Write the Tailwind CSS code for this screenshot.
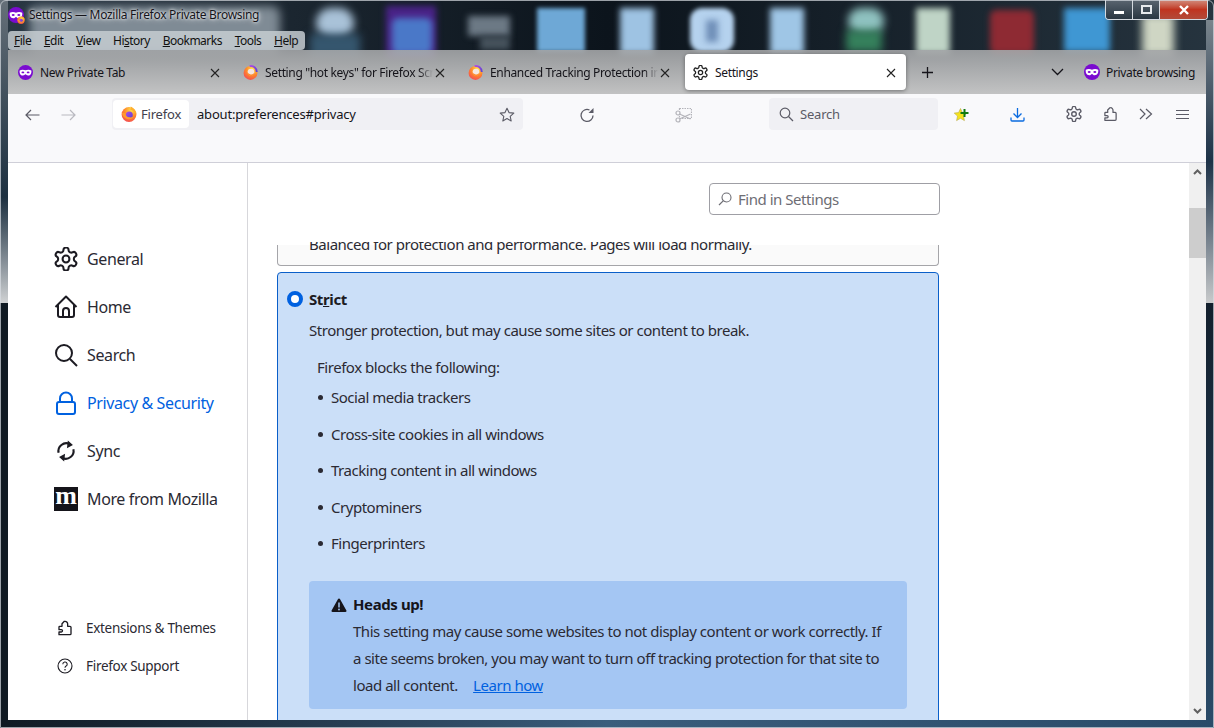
<!DOCTYPE html>
<html lang="en">
<head>
  <meta charset="UTF-8">
  <title>Settings</title>
  <script src="https://cdn.jsdelivr.net/npm/@tailwindcss/browser@4"></script>
</head>
<body class="bg-[#0d1620]">
  <svg class="absolute w-0 h-0">
    <defs>
      <radialGradient id="fx" cx="0.65" cy="0.2" r="1">
        <stop offset="0" stop-color="#ffe14a"/><stop offset="0.45" stop-color="#ff8a2b"/><stop offset="1" stop-color="#f0355f"/>
      </radialGradient>
      <linearGradient id="fxp" x1="0" y1="0" x2="1" y2="1">
        <stop offset="0" stop-color="#b14ee0"/><stop offset="1" stop-color="#5a3fd6"/>
      </linearGradient>
    </defs>
    <symbol id="gear" viewBox="1.5 1.5 21 21"><path fill="none" stroke="currentColor" stroke-width="1.800" stroke-linejoin="round" d="M12.220 2h-.44a2 2 0 0 0-2 2v.18a2 2 0 0 1-1 1.730l-.43.25a2 2 0 0 1-2 0l-.15-.08a2 2 0 0 0-2.730.73l-.22.38a2 2 0 0 0 .73 2.730l.15.1a2 2 0 0 1 1 1.720v.51a2 2 0 0 1-1 1.740l-.15.09a2 2 0 0 0-.73 2.730l.22.38a2 2 0 0 0 2.730.73l.15-.08a2 2 0 0 1 2 0l.43.25a2 2 0 0 1 1 1.730V20a2 2 0 0 0 2 2h.44a2 2 0 0 0 2-2v-.18a2 2 0 0 1 1-1.730l.43-.25a2 2 0 0 1 2 0l.15.08a2 2 0 0 0 2.730-.73l.22-.39a2 2 0 0 0-.73-2.730l-.15-.08a2 2 0 0 1-1-1.740v-.5a2 2 0 0 1 1-1.740l.15-.09a2 2 0 0 0 .73-2.730l-.22-.38a2 2 0 0 0-2.730-.73l-.15.08a2 2 0 0 1-2 0l-.43-.25a2 2 0 0 1-1-1.730V4a2 2 0 0 0-2-2z"/><circle cx="12" cy="12" r="3" fill="none" stroke="currentColor" stroke-width="1.800"/></symbol>
    <symbol id="puzzle" viewBox="0 0 24 24"><path fill="none" stroke="currentColor" stroke-width="2" stroke-linejoin="round" d="M3 22h16.500a1.500 1.500 0 0 0 1.500-1.500V11a1.500 1.500 0 0 0-1.500-1.500H16V6.500a4 4 0 0 0-4-4.500h-1L7.500 5.500V9.500H4a1 1 0 0 0-1 1v4h3.500a1.700 1.700 0 0 1 0 3.500H3z"/></symbol>
    <symbol id="mask" viewBox="0 0 16 16"><circle cx="8" cy="8" r="8" fill="#7a0bd0"/><path fill="#fff" d="M1.800 5.800C3.500 4.700 6.500 4.900 8 5.700c1.500-.8 4.500-1 6.200.1.500 2.700-.7 5.500-3.400 5.500-1.500 0-2-1.400-2.800-1.400s-1.300 1.400-2.800 1.400C2.500 11.300 1.300 8.500 1.800 5.800z"/><ellipse cx="5.200" cy="7.900" rx="1.500" ry="1" fill="#7a0bd0"/><ellipse cx="10.800" cy="7.900" rx="1.500" ry="1" fill="#7a0bd0"/></symbol>
    <symbol id="firefox" viewBox="0 0 16 16"><circle cx="8" cy="8.500" r="7.400" fill="url(#fx)"/><path fill="#ffb02e" d="M9.500.5c3 1.200 5.800 4 5.900 8-1.500-3-3.700-4.500-6.400-4.500 1.200-1 1.200-2.300.5-3.500z"/><circle cx="8.300" cy="8.900" r="3.500" fill="url(#fxp)"/><path fill="#ff9a2e" d="M.8 6.500c.7 4.500 4 6.800 7.200 6.800 2.700 0 4.500-1.700 5-3.500-1 1.200-2.800 1.800-4.500 1.500C6 11.400 4.300 9.300 4.500 6.800 3 7.200 1.800 7.200.8 6.500z"/></symbol>
    <symbol id="favicon" viewBox="0 0 16 16"><circle cx="8" cy="8.500" r="7.400" fill="url(#fx)"/><path d="M7 1.200c4-1 7.800 2.300 7.600 6.300" fill="none" stroke="url(#fxp)" stroke-width="2"/><circle cx="8.500" cy="7.500" r="3.600" fill="#f6e7e0"/><path d="M4.500 7.500c0 3.200 3 5 5.500 4 1.500-.6 2.200-1.800 2.200-3.400-1 1.700-2.500 2.200-4 1.900-1.700-.3-3-1.400-3.700-2.500z" fill="#ff8a2b"/></symbol>
    <symbol id="close" viewBox="0 0 10 10"><path d="M1 1l8 8M9 1l-8 8" stroke="currentColor" stroke-width="1.100" fill="none"/></symbol>
  </svg>

  <div class="relative w-[1214px] h-[728px] overflow-hidden bg-[#0d1620] font-['Noto_Sans','Open_Sans',sans-serif] text-[#15141a]">

    <!-- desktop behind the glass frame -->
    <div class="absolute inset-0 overflow-hidden">
      <div class="absolute left-0 top-0 w-[1214px] h-[100px] bg-gradient-to-r from-[#2a3844] via-[#0c141c] to-[#26343f]"></div>
      <div class="absolute left-[30px] top-[6px] w-[250px] h-[48px] rounded-[8px] bg-[#7f8b95] blur-[5px]"></div>
      <div class="absolute left-[316px] top-[8px] w-[38px] h-[30px] rounded-full bg-[#a9c2d8] blur-[4px]"></div>
      <div class="absolute left-[310px] top-[34px] w-[50px] h-[24px] bg-[#35566e] blur-[4px]"></div>
      <div class="absolute left-[386px] top-[6px] w-[50px] h-[52px] bg-[#4a2388] blur-[3px]"></div>
      <div class="absolute left-[392px] top-[18px] w-[40px] h-[36px] rounded-md bg-[#4a78c8] blur-[3px]"></div>
      <div class="absolute left-[468px] top-[16px] w-[42px] h-[20px] bg-[#6c7985] blur-[3px]"></div>
      <div class="absolute left-[480px] top-[36px] w-[30px] h-[14px] bg-[#46525c] blur-[3px]"></div>
      <div class="absolute left-[537px] top-[8px] w-[48px] h-[44px] bg-[#6ea8d6] blur-[2px]"></div>
      <div class="absolute left-[620px] top-[8px] w-[34px] h-[46px] bg-[#9ec3e3] blur-[3px]"></div>
      <div class="absolute left-[690px] top-[8px] w-[44px] h-[44px] rounded-xl bg-[#b5d2ee] blur-[2px]"></div>
      <div class="absolute left-[706px] top-[20px] w-[12px] h-[22px] bg-[#6f8fb8] blur-[3px]"></div>
      <div class="absolute left-[770px] top-[8px] w-[34px] h-[46px] bg-[#9fc6e6] blur-[3px]"></div>
      <div class="absolute left-[848px] top-[8px] w-[36px] h-[26px] rounded-full bg-[#8fc2c0] blur-[4px]"></div>
      <div class="absolute left-[846px] top-[30px] w-[36px] h-[22px] bg-[#35805c] blur-[4px]"></div>
      <div class="absolute left-[916px] top-[8px] w-[34px] h-[46px] bg-[#bfd4c6] blur-[3px]"></div>
      <div class="absolute left-[990px] top-[10px] w-[44px] h-[44px] rounded-md bg-[#8e2a33] blur-[3px]"></div>
      <div class="absolute left-[1064px] top-[8px] w-[46px] h-[44px] bg-[#3f97d3] blur-[3px]"></div>
      <div class="absolute left-[1142px] top-[14px] w-[32px] h-[42px] bg-[#cfd6c4] blur-[4px]"></div>
      <!-- side and bottom frame colours -->
      <div class="absolute left-0 top-0 w-[8px] h-[303px] bg-gradient-to-b from-[#667079] via-[#1d3040] via-[65%] to-[#d0d2d3]"></div>
      <div class="absolute left-0 top-[303px] w-[8px] h-[425px] bg-[#101a23]"></div>
      <div class="absolute right-0 top-[20px] w-[8px] h-[283px] bg-gradient-to-b from-[#7a858d] via-[#1d3247] via-[50%] to-[#c8cacb]"></div>
      <div class="absolute right-0 top-[303px] w-[8px] h-[425px] bg-gradient-to-b from-[#121f2c] to-[#2a4b69]"></div>
      <div class="absolute left-0 bottom-0 w-[1214px] h-[8px] bg-gradient-to-r from-[#101a23] via-[#3a5d7c] to-[#2a4b69]"></div>
    </div>

    <div class="relative flex flex-col h-[728px] px-[8px] pb-[8px]">
      <!-- title + menu -->
      <div class="h-[50px] shrink-0">
        <div class="h-[31px] flex items-center gap-[5px] pb-[1px]">
          <span class="relative w-[16px] h-[16px] shrink-0">
            <svg class="w-[16px] h-[16px]"><use href="#mask"/></svg>
            <svg class="absolute -right-[1px] -bottom-[1px] w-[8px] h-[8px]"><use href="#firefox"/></svg>
          </span>
          <span class="text-[12px] tracking-[-0.3px] [text-shadow:0_0_6px_#fff,0_0_3px_#fff]">Settings — Mozilla Firefox Private Browsing</span>
        </div>
        <div class="w-[297px] h-[19px] bg-[#c6ccd1]/85 rounded-[4px] flex items-center pl-[6px] gap-[12.7px] text-[12px] tracking-[-0.5px] text-[#111]">
          <span><u>F</u>ile</span>
          <span><u>E</u>dit</span>
          <span><u>V</u>iew</span>
          <span>Hi<u>s</u>tory</span>
          <span><u>B</u>ookmarks</span>
          <span><u>T</u>ools</span>
          <span><u>H</u>elp</span>
        </div>
      </div>

      <!-- tab strip -->
      <div class="h-[44px] shrink-0 flex items-center pl-[2px] bg-gradient-to-b from-[#a4a6a8]/90 to-[#cbcbcb]/95 text-[12px] tracking-[-0.35px]">
        <div class="w-[225px] h-[36px] flex items-center pl-[8px] pr-[15px] gap-[7px] pt-[1px]">
          <svg class="w-[15px] h-[15px] shrink-0"><use href="#mask"/></svg>
          <span class="flex-1 whitespace-nowrap overflow-hidden">New Private Tab</span>
          <svg class="w-[10px] h-[10px] shrink-0 text-[#222]"><use href="#close"/></svg>
        </div>
        <div class="w-[225px] h-[36px] flex items-center pl-[8px] pr-[15px] gap-[7px] pt-[1px]">
          <svg class="w-[15px] h-[15px] shrink-0"><use href="#favicon"/></svg>
          <span class="flex-1 whitespace-nowrap overflow-hidden [mask-image:linear-gradient(to_left,transparent,black_14px)]">Setting "hot keys" for Firefox Screenshots</span>
          <svg class="-ml-[5px] w-[10px] h-[10px] shrink-0 text-[#222]"><use href="#close"/></svg>
        </div>
        <div class="w-[225px] h-[36px] flex items-center pl-[8px] pr-[15px] gap-[7px] pt-[1px]">
          <svg class="w-[15px] h-[15px] shrink-0"><use href="#favicon"/></svg>
          <span class="flex-1 whitespace-nowrap overflow-hidden [mask-image:linear-gradient(to_left,transparent,black_14px)]">Enhanced Tracking Protection in Firefox</span>
          <svg class="-ml-[5px] w-[10px] h-[10px] shrink-0 text-[#222]"><use href="#close"/></svg>
        </div>
        <div class="w-[221px] h-[36px] flex items-center pl-[8px] pr-[10px] gap-[7px] bg-white rounded-[4px] shadow-[0_1px_4px_rgba(0,0,0,0.4)] pt-[1px]">
          <svg class="w-[15px] h-[15px] shrink-0 text-[#222]"><use href="#gear"/></svg>
          <span class="flex-1">Settings</span>
          <svg class="w-[10px] h-[10px] shrink-0 text-[#222]"><use href="#close"/></svg>
        </div>
        <svg class="ml-[15px] w-[13px] h-[13px] shrink-0" viewBox="0 0 13 13"><path d="M6.500 1v11M1 6.500h11" stroke="#15141a" stroke-width="1.300"/></svg>
        <svg class="ml-[117px] w-[13px] h-[8px] shrink-0" viewBox="0 0 13 8"><path d="M1 1l5.500 5.500L12 1" stroke="#15141a" stroke-width="1.300" fill="none"/></svg>
        <svg class="ml-[20px] w-[16px] h-[16px] shrink-0"><use href="#mask"/></svg>
        <span class="ml-[6px] whitespace-nowrap pt-[1px]">Private browsing</span>
      </div>

      <!-- nav bar -->
      <div class="h-[69px] shrink-0 bg-[#f9f9fb] border-b border-[#cfcfd8] pt-[4px] text-[#5b5b66]">
        <div class="flex items-center h-[32px]">
          <svg class="ml-[17px] mt-[1px] w-[15px] h-[12px]" viewBox="0 0 15 12"><path d="M14.500 6H1M6 1L1 6l5 5" stroke="#5b5b66" stroke-width="1.200" fill="none"/></svg>
          <svg class="ml-[21px] mt-[1px] w-[15px] h-[12px]" viewBox="0 0 15 12"><path d="M.5 6H14M9 1l5 5-5 5" stroke="#b9b9c0" stroke-width="1.200" fill="none"/></svg>
          <div class="ml-[36px] w-[411px] h-[32px] bg-[#f0f0f4] rounded-[4px] flex items-center pl-[1px] pr-[8px] text-[13px] tracking-[-0.2px] text-[#15141a]">
            <div class="w-[76px] h-[28px] bg-white rounded-[4px] flex items-center pl-[8px] gap-[4px]">
              <svg class="w-[16px] h-[16px]"><use href="#firefox"/></svg>
              <span class="text-[#42414d] pt-[2px]">Firefox</span>
            </div>
            <span class="ml-[8px] flex-1 pt-[2px]">about:preferences#privacy</span>
            <svg class="w-[16px] h-[16px] mt-[1px]" viewBox="0 0 16 16"><path d="M8 1.200l2 4.400 4.800.5-3.600 3.200 1 4.700L8 11.600 3.800 14l1-4.700L1.200 6.100 6 5.600z" fill="none" stroke="#5b5b66" stroke-width="1.100" stroke-linejoin="round"/></svg>
          </div>
          <svg class="ml-[56px] mt-[1px] w-[16px] h-[16px]" viewBox="0 0 16 16"><path d="M14 8.500A6 6 0 1 1 10.500 3" fill="none" stroke="#5b5b66" stroke-width="1.300"/><path d="M14.500 1v5h-5z" fill="#5b5b66"/></svg>
          <svg class="ml-[80px] mt-[1px] w-[17px] h-[16px]" viewBox="0 0 17 16"><rect x="4.500" y="1.500" width="12" height="10" fill="none" stroke="#b4b4ba" stroke-width="1.200" stroke-dasharray="1.500 1"/><circle cx="3" cy="6" r="2" fill="#f9f9fb" stroke="#b4b4ba" stroke-width="1.200"/><circle cx="3" cy="13" r="2" fill="#f9f9fb" stroke="#b4b4ba" stroke-width="1.200"/><path d="M4.500 7l11 5M4.500 12l11-5" stroke="#b4b4ba" stroke-width="1.300"/></svg>
          <div class="ml-[77px] w-[169px] h-[32px] bg-[#f0f0f4] rounded-[4px] flex items-center pl-[10px] gap-[6px] text-[13px] tracking-[-0.2px]">
            <svg class="w-[15px] h-[15px]" viewBox="0 0 15 15"><circle cx="6" cy="6" r="4.800" fill="none" stroke="#5b5b66" stroke-width="1.200"/><path d="M9.500 9.500L14 14" stroke="#5b5b66" stroke-width="1.300"/></svg>
            <span class="text-[#5b5b66] pt-[2px]">Search</span>
          </div>
          <svg class="ml-[15px] mt-[1px] w-[17px] h-[16px]" viewBox="0 0 17 16"><path d="M7.500 1.500l1.900 4.100 4.400.5-3.300 3 .9 4.500-3.900-2.300-3.900 2.300.9-4.500-3.300-3 4.400-.5z" fill="#f5e31c" stroke="#b7a94a" stroke-width=".6"/><path d="M11.500 2v8M7.500 6h8" stroke="#117a11" stroke-width="2"/></svg>
          <svg class="ml-[40px] mt-[1px] w-[15px] h-[15px]" viewBox="0 0 15 15"><path d="M7.500 1v9M3.500 6.500l4 4 4-4M1 10.500v2.500a1 1 0 0 0 1 1h11a1 1 0 0 0 1-1v-2.500" fill="none" stroke="#0a6be0" stroke-width="1.300"/></svg>
          <svg class="ml-[41px] w-[16px] h-[16px] text-[#5b5b66]"><use href="#gear"/></svg>
          <svg class="ml-[21px] w-[15px] h-[16px] text-[#5b5b66]"><use href="#puzzle"/></svg>
          <svg class="ml-[21px] w-[14px] h-[12px]" viewBox="0 0 14 12"><path d="M1 1l5 5-5 5M7 1l5.500 5L7 11" fill="none" stroke="#5b5b66" stroke-width="1.200"/></svg>
          <svg class="ml-[23px] w-[13px] h-[11px]" viewBox="0 0 13 11"><path d="M0 1.500h13M0 5.500h13M0 9.500h13" stroke="#5b5b66" stroke-width="1.200"/></svg>
        </div>
      </div>

      <!-- page -->
      <div class="flex-1 min-h-0 flex bg-white">
        <aside class="w-[240px] shrink-0 border-r border-[#d7d7db] flex flex-col justify-between pt-[72px] pb-[35px] text-[16px] tracking-[-0.38px] text-[#2b2a33]">
          <nav>
            <div class="h-[48px] flex items-center pl-[46px] gap-[9px]">
              <svg class="w-[24px] h-[24px] text-[#1c1b22]"><use href="#gear"/></svg><span>General</span>
            </div>
            <div class="h-[48px] flex items-center pl-[46px] gap-[9px]">
              <svg class="w-[24px] h-[24px]" viewBox="0 0 24 24"><path d="M1.500 12L12 1.500 22.500 12M4 10v10a2 2 0 0 0 2 2h12a2 2 0 0 0 2-2V10M9 22v-6a3 3 0 0 1 6 0v6" fill="none" stroke="#1c1b22" stroke-width="2" stroke-linejoin="round"/></svg><span>Home</span>
            </div>
            <div class="h-[48px] flex items-center pl-[46px] gap-[9px]">
              <svg class="w-[24px] h-[24px]" viewBox="0 0 24 24"><circle cx="10" cy="10" r="8" fill="none" stroke="#1c1b22" stroke-width="2"/><path d="M16 16l7 7" stroke="#1c1b22" stroke-width="2"/></svg><span>Search</span>
            </div>
            <div class="h-[48px] flex items-center pl-[46px] gap-[9px] text-[#0061e0]">
              <svg class="w-[24px] h-[24px]" viewBox="0 0 24 24"><path d="M6 11V7.500a6 6 0 0 1 12 0V11" fill="none" stroke="#0061e0" stroke-width="2"/><rect x="3" y="11" width="18" height="12" rx="2" fill="none" stroke="#0061e0" stroke-width="2"/></svg><span>Privacy &amp; Security</span>
            </div>
            <div class="h-[48px] flex items-center pl-[46px] gap-[9px]">
              <svg class="w-[24px] h-[24px]" viewBox="-1 -1 26 26"><path d="M4 14a8.500 8.500 0 0 1 12-9.500M20 10a8.500 8.500 0 0 1-12 9.500" fill="none" stroke="#1c1b22" stroke-width="2.300"/><path d="M14 .5l5.500 5L13 9zM10 23.500l-5.500-5L11 15z" fill="#1c1b22"/></svg><span>Sync</span>
            </div>
            <div class="h-[48px] flex items-center pl-[46px] gap-[9px]">
              <span class="w-[24px] h-[24px] bg-[#15141a] flex items-center justify-center text-white text-[26px] leading-none font-bold font-['Liberation_Serif',serif] pb-[6px] tracking-normal">m</span><span>More from Mozilla</span>
            </div>
          </nav>
          <div class="text-[13.5px] tracking-[-0.3px]">
            <div class="h-[38px] flex items-center pl-[49px] gap-[13px]">
              <svg class="w-[16px] h-[16px] text-[#1c1b22]"><use href="#puzzle"/></svg><span>Extensions &amp; Themes</span>
            </div>
            <div class="h-[38px] flex items-center pl-[49px] gap-[13px]">
              <svg class="w-[16px] h-[16px]" viewBox="0 0 16 16"><circle cx="8" cy="8" r="7" fill="none" stroke="#1c1b22" stroke-width="1.100"/><path d="M5.800 6.200a2.200 2.200 0 1 1 3.300 1.900c-.7.400-1.100.8-1.100 1.600" fill="none" stroke="#1c1b22" stroke-width="1.100"/><circle cx="8" cy="11.700" r=".8" fill="#1c1b22"/></svg><span>Firefox Support</span>
            </div>
          </div>
        </aside>

        <main class="flex-1 min-w-0 flex flex-col text-[15px] tracking-[-0.47px] text-[#2b2a33]">
          <div class="h-[77px] shrink-0 pt-[20px] pl-[461px]">
            <div class="w-[231px] h-[32px] border border-[#9f9fa5] rounded-[4px] flex items-center pl-[8px] gap-[6px] text-[#6d6d74]">
              <svg class="w-[14px] h-[14px]" viewBox="0 0 14 14"><circle cx="8.500" cy="5.500" r="4.500" fill="none" stroke="#6d6d74" stroke-width="1.100"/><path d="M5.200 8.800L1 13" stroke="#6d6d74" stroke-width="1.200"/></svg>
              <span>Find in Settings</span>
            </div>
          </div>
          <div class="flex-1 min-h-0 overflow-hidden pl-[29px]">
            <!-- tail of the Standard card, scrolled under the search header -->
            <div class="w-[662px] h-[26px] pt-[5px]">
              <div class="h-[21px] border border-t-0 border-[#a5a5a9] rounded-b-[4px] bg-[#fafafa] relative">
                <div class="absolute left-[31px] -top-[3px] h-[20px] overflow-hidden">
                  <p class="-mt-[8px] leading-[20px] whitespace-nowrap text-[#2b2a33]">Balanced for protection and performance. Pages will load normally.</p>
                </div>
              </div>
            </div>
            <div class="w-[662px] mt-[6px] border border-[#0a5fc9] rounded-[4px] bg-[#cbdff8] h-[500px] pt-[16px]">
              <div class="flex items-center h-[20px] pl-[9px] gap-[6px] font-bold text-[#1c1b22] tracking-[-0.4px]">
                <span class="w-[16px] h-[16px] rounded-full border-[4px] border-[#0061e0] bg-white shrink-0"></span>
                <span>St<u>r</u>ict</span>
              </div>
              <p class="mt-[11px] leading-[20px] pl-[31px]">Stronger protection, but may cause some sites or content to break.</p>
              <p class="mt-[17px] leading-[20px] pl-[39px]">Firefox blocks the following:</p>
              <ul class="mt-[10px] pl-[53px] flex flex-col gap-[16.5px] leading-[20px]">
                <li class="relative before:absolute before:-left-[13px] before:top-[8px] before:w-[5px] before:h-[5px] before:rounded-full before:bg-[#2b2a33]">Social media trackers</li>
                <li class="relative before:absolute before:-left-[13px] before:top-[8px] before:w-[5px] before:h-[5px] before:rounded-full before:bg-[#2b2a33]">Cross-site cookies in all windows</li>
                <li class="relative before:absolute before:-left-[13px] before:top-[8px] before:w-[5px] before:h-[5px] before:rounded-full before:bg-[#2b2a33]">Tracking content in all windows</li>
                <li class="relative before:absolute before:-left-[13px] before:top-[8px] before:w-[5px] before:h-[5px] before:rounded-full before:bg-[#2b2a33]">Cryptominers</li>
                <li class="relative before:absolute before:-left-[13px] before:top-[8px] before:w-[5px] before:h-[5px] before:rounded-full before:bg-[#2b2a33]">Fingerprinters</li>
              </ul>
              <div class="ml-[31px] mt-[28px] w-[598px] h-[128px] bg-[#a4c6f3] rounded-[4px] pt-[13px] pl-[22px] flex gap-[6px]">
                <svg class="w-[16px] h-[16px] mt-[3px] shrink-0" viewBox="0 0 16 16"><path d="M8 1.500c.5 0 .9.300 1.100.7l6.300 11.300c.4.700-.1 1.500-.9 1.500H1.500c-.8 0-1.300-.8-.9-1.500L6.900 2.200c.2-.4.600-.7 1.100-.7z" fill="#15141a"/><path d="M8 5.500v5" stroke="#a4c6f3" stroke-width="1.500"/><circle cx="8" cy="12.500" r=".9" fill="#a4c6f3"/></svg>
                <div>
                  <p class="font-bold leading-[20px] text-[#15141a] tracking-[-0.4px]">Heads up!</p>
                  <p class="mt-[4px] leading-[27px] whitespace-nowrap">This setting may cause some websites to not display content or work correctly. If<br>a site seems broken, you may want to turn off tracking protection for that site to<br>load all content. <a class="ml-[12px] underline text-[#0061e0]" href="#">Learn how</a></p>
                </div>
              </div>
            </div>
          </div>
        </main>

        <div class="w-[17px] shrink-0 bg-[#f0f0f0] flex flex-col relative">
          <svg class="absolute left-[4px] top-[6px] w-[9px] h-[6px]" viewBox="0 0 9 6"><path d="M1 5l3.500-3.500L8 5" fill="none" stroke="#606060" stroke-width="2"/></svg>
          <div class="mt-[45px] h-[50px] bg-[#cdcdcd]"></div>
          <svg class="absolute left-[4px] bottom-[6px] w-[9px] h-[6px]" viewBox="0 0 9 6"><path d="M1 1l3.500 3.500L8 1" fill="none" stroke="#606060" stroke-width="2"/></svg>
        </div>
      </div>
    </div>

    <!-- window caption buttons -->
    <div class="absolute left-[1105px] top-0 w-[103px] h-[20px] flex border border-t-0 border-[#d5dae0] rounded-b-[4px] overflow-hidden">
      <div class="w-[27px] border-r border-[#d5dae0] bg-gradient-to-b from-[#5a6570] to-[#2a3742] flex items-center justify-center"><span class="w-[10px] h-[3px] mt-[5px] bg-white"></span></div>
      <div class="w-[27px] border-r border-[#d5dae0] bg-gradient-to-b from-[#5a6570] to-[#2a3742] flex items-center justify-center"><span class="w-[11px] h-[9px] border-2 border-[#e6e9ec]"></span></div>
      <div class="flex-1 bg-gradient-to-b from-[#d08b7c] via-[#c0341f] to-[#b24a38] flex items-center justify-center">
        <svg class="w-[10px] h-[10px]" viewBox="0 0 10 10"><path d="M1 1l8 8M9 1l-8 8" stroke="#fff" stroke-width="2.400"/></svg>
      </div>
    </div>
    <div class="absolute inset-0 border border-[#d8dde2]/70 rounded-t-[6px] pointer-events-none"></div>
  </div>
</body>
</html>
